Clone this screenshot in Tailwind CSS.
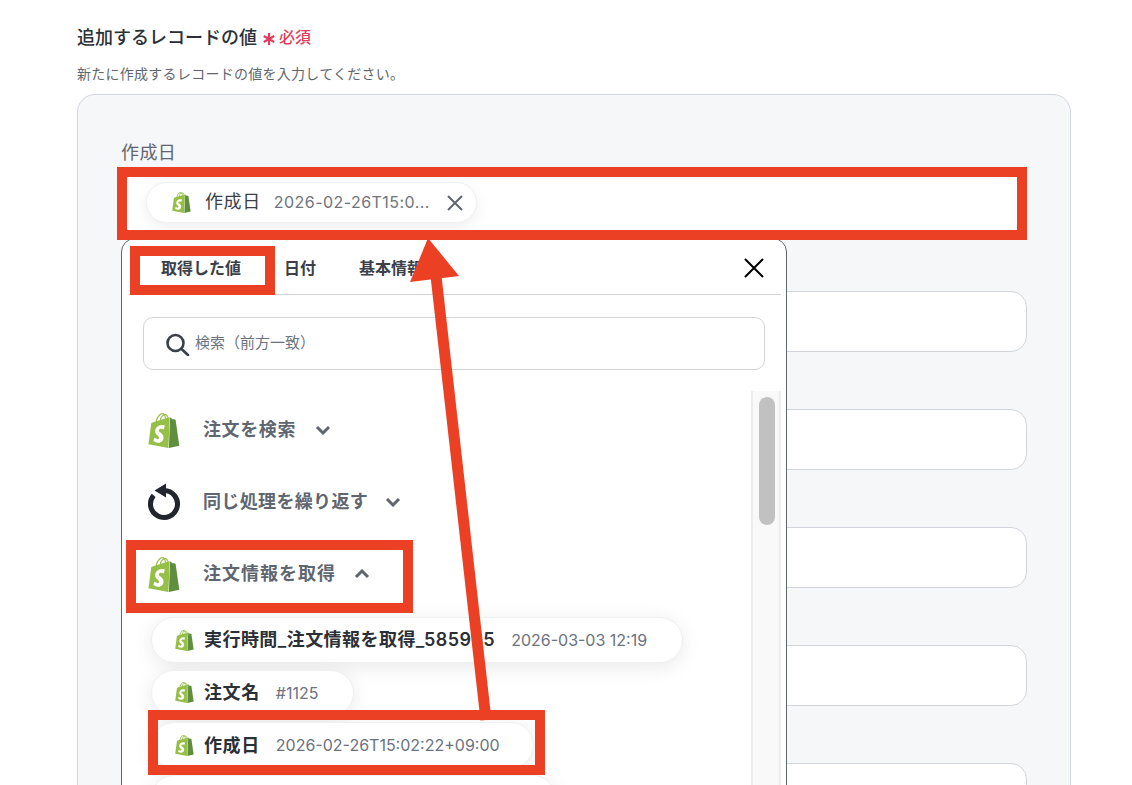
<!doctype html>
<html lang="ja">
<head>
<meta charset="utf-8">
<script src="https://cdn.jsdelivr.net/npm/@tailwindcss/browser@4"></script>
</head>
<body class="bg-white">
<div class="relative h-[785px] w-[1132px] overflow-hidden bg-white font-['Inter','Noto_Sans_CJK_JP',sans-serif]">
  <svg class="hidden"><defs>
    <g id="shop">
      <path fill="#5e8e3e" d="M15.337 23.979l7.216-1.561s-2.604-17.613-2.625-17.73c-.018-.116-.114-.192-.211-.192s-1.929-.136-1.929-.136-1.275-1.274-1.439-1.411c-.045-.037-.075-.057-.121-.074l-.914 21.104h.023z"/>
      <path fill="#95bf47" d="M11.71 11.305s-.81-.424-1.774-.424c-1.447 0-1.504.906-1.504 1.141 0 1.232 3.24 1.715 3.24 4.629 0 2.295-1.44 3.76-3.406 3.76-2.354 0-3.54-1.465-3.54-1.465l.646-2.086s1.245 1.066 2.28 1.066c.675 0 .975-.545.975-.932 0-1.619-2.654-1.694-2.654-4.359-.034-2.237 1.571-4.416 4.827-4.416 1.257 0 1.875.361 1.875.361l-.945 2.715-.02.01zM11.17.83c.136 0 .271.038.405.135-.984.465-2.064 1.639-2.508 3.992-.656.213-1.293.405-1.889.578C7.697 3.75 8.951.84 11.17.84V.83zm1.235 2.949v.135c-.754.232-1.583.484-2.394.736.466-1.777 1.333-2.645 2.085-2.971.193.501.309 1.176.309 2.1zm.539-2.234c.694.074 1.141.867 1.429 1.755-.349.114-.735.231-1.158.366v-.252c0-.752-.096-1.371-.271-1.871v.002zm2.992 1.289c-.02 0-.06.021-.078.021s-.289.075-.714.21c-.423-1.233-1.176-2.37-2.508-2.37h-.115C12.135.209 11.669 0 11.265 0 8.159 0 6.675 3.877 6.21 5.846c-1.194.365-2.063.636-2.16.674-.675.213-.694.232-.772.87-.075.462-1.83 14.063-1.83 14.063L15.009 24l.927-21.166z"/>
    </g>
  </defs></svg>

  <div class="pl-[77px] pr-[61px] pt-[24px]">
    <div class="flex h-[27px] items-center">
      <span class="text-[18px] leading-[27px] font-medium text-[#2b2f36]">追加するレコードの値</span>
      <svg viewBox="0 0 14 14" class="ml-[5px] mt-[3px] h-[14px] w-[14px]" fill="none" stroke="#e23d5e" stroke-width="2.2"><path d="M7 1V13M1.8 4L12.2 10M12.2 4L1.8 10"/></svg>
      <span class="ml-[3px] text-[16px] leading-[27px] font-medium text-[#e23d5e]">必須</span>
    </div>
    <p class="mt-[12px] text-[14px] leading-[21px] tracking-[0.27px] text-[#5f6670]">新たに作成するレコードの値を入力してください。</p>

    <div class="relative mt-[10px] h-[760px] rounded-[18px] border border-[#d1d5de] bg-[#f6f7f9] pl-[43px] pr-[43px] pt-[44px]">
      <div class="flex flex-col gap-[24px]">
        <div>
          <div class="mb-[7px] h-[27px] text-[18px] leading-[27px] tracking-[0.4px] text-[#5f6670]">作成日</div>
          <div class="flex h-[61px] items-center rounded-[16px] border border-[#d1d5db] bg-white pb-[2px] pl-[24px]">
            <div class="flex h-[41px] items-center rounded-full border border-[#eef0f3] bg-white pl-[24px] pr-[12px] shadow-[0_4px_14px_rgba(0,0,0,0.07)]">
              <svg viewBox="0 0 24 24" class="h-[21px] w-[21px]"><use href="#shop"/></svg>
              <span class="ml-[13px] pb-[2px] text-[18px] tracking-[0.6px] text-[#3b4048]">作成日</span>
              <span class="ml-[13px] w-[157px] whitespace-nowrap pb-[1px] text-[16px] tracking-[0.45px] text-[#6f747c]">2026-02-26T15:0...</span>
              <svg viewBox="0 0 18 18" class="ml-[15px] h-[18px] w-[18px]" fill="none" stroke="#5f6670" stroke-width="2"><path d="M2 2l14 14M16 2L2 16"/></svg>
            </div>
          </div>
        </div>
        <div><div class="mb-[6px] h-[27px]"></div><div class="h-[61px] rounded-[16px] border border-[#d1d5db] bg-white"></div></div>
        <div><div class="mb-[6px] h-[27px]"></div><div class="h-[61px] rounded-[16px] border border-[#d1d5db] bg-white"></div></div>
        <div><div class="mb-[6px] h-[27px]"></div><div class="h-[61px] rounded-[16px] border border-[#d1d5db] bg-white"></div></div>
        <div><div class="mb-[6px] h-[27px]"></div><div class="h-[61px] rounded-[16px] border border-[#d1d5db] bg-white"></div></div>
        <div><div class="mb-[6px] h-[27px]"></div><div class="h-[61px] rounded-[16px] border border-[#d1d5db] bg-white"></div></div>
      </div>

      <!-- dropdown -->
      <div class="absolute left-[43px] top-[143px] flex h-[600px] w-[666px] flex-col rounded-[14px] border border-[#5f6670] bg-white">
        <div class="ml-[8px] mr-[5px] flex h-[56px] items-center justify-between border-b border-[#d1d5db] pl-[31px] pr-[17px] pt-[3px]">
          <div class="flex gap-[43px] text-[16px] font-semibold text-[#3b4048]">
            <span>取得した値</span><span>日付</span><span>基本情報</span>
          </div>
          <svg viewBox="0 0 20 20" class="mb-[1px] h-[20px] w-[20px]" fill="none" stroke="#000" stroke-width="2"><path d="M1 1l18 18M19 1L1 19"/></svg>
        </div>
        <div class="mx-[21px] mt-[22px] flex h-[53px] items-center gap-[5px] rounded-[10px] border border-[#d1d5db] bg-white pl-[22px]">
          <svg viewBox="0 0 24 24" class="h-[24px] w-[24px]" fill="none" stroke="#3b4048" stroke-width="2.6" stroke-linecap="round"><circle cx="9.5" cy="11" r="8"/><path d="M15.5 17L22 23"/></svg>
          <span class="pb-[1px] text-[15px] text-[#6b7280]">検索（前方一致）</span>
        </div>
        <div class="mt-[21px] flex min-h-0 flex-1 overflow-hidden pr-[5px]">
          <div class="min-w-0 flex-1 pt-[3px]">
            <div class="flex h-[72px] items-center pl-[24px]">
              <svg viewBox="0 0 24 24" class="h-[35px] w-[36px]"><use href="#shop"/></svg>
              <span class="ml-[21px] pb-[2px] text-[18px] font-semibold tracking-[0.6px] text-[#5f6670]">注文を検索</span>
              <svg viewBox="0 0 16 10" class="ml-[19px] h-[10px] w-[16px]" fill="none" stroke="#5f6670" stroke-width="3"><path d="M2 2l6 6 6-6"/></svg>
            </div>
            <div class="flex h-[72px] items-center pl-[24px]">
              <svg viewBox="0 0 36 40" class="h-[40px] w-[36px]"><path d="M18 8.5A13.5 13.5 0 1 1 7.66 13.3" fill="none" stroke="#22262c" stroke-width="5"/><path d="M20 1.5V15.5L8.5 8.5Z" fill="#22262c"/></svg>
              <span class="ml-[21px] pb-[2px] text-[18px] font-semibold tracking-[0.35px] text-[#5f6670]">同じ処理を繰り返す</span>
              <svg viewBox="0 0 16 10" class="ml-[17px] h-[10px] w-[16px]" fill="none" stroke="#5f6670" stroke-width="3"><path d="M2 2l6 6 6-6"/></svg>
            </div>
            <div class="flex h-[72px] items-center pl-[24px]">
              <svg viewBox="0 0 24 24" class="h-[35px] w-[36px]"><use href="#shop"/></svg>
              <span class="ml-[21px] pb-[2px] text-[18px] font-semibold tracking-[1px] text-[#5f6670]">注文情報を取得</span>
              <svg viewBox="0 0 16 10" class="ml-[18px] h-[10px] w-[16px]" fill="none" stroke="#5f6670" stroke-width="3"><path d="M2 8l6-6 6 6"/></svg>
            </div>
            <div class="mt-[7px] flex flex-col items-start gap-[6.67px] pl-[29px]">
              <div class="flex h-[46px] items-center rounded-full border border-[#eef0f3] bg-white pl-[22px] pr-[35px] shadow-[0_4px_20px_rgba(0,0,0,0.09)]">
                <svg viewBox="0 0 24 24" class="h-[21px] w-[21px]"><use href="#shop"/></svg>
                <span class="ml-[9px] pb-[2px] text-[18px] font-semibold tracking-[0.45px] text-[#2b2f36]">実行時間_注文情報を取得_585965</span>
                <span class="ml-[16px] text-[16px] text-[#6b7280]">2026-03-03 12:19</span>
              </div>
              <div class="flex h-[46px] items-center rounded-full border border-[#eef0f3] bg-white pl-[22px] pr-[35px] shadow-[0_4px_20px_rgba(0,0,0,0.09)]">
                <svg viewBox="0 0 24 24" class="h-[21px] w-[21px]"><use href="#shop"/></svg>
                <span class="ml-[9px] text-[18px] font-semibold tracking-[0.6px] text-[#2b2f36]">注文名</span>
                <span class="ml-[16px] text-[16px] text-[#6b7280]">#1125</span>
              </div>
              <div class="flex h-[46px] items-center rounded-full border border-[#eef0f3] bg-white pl-[22px] pr-[33px] shadow-[0_4px_20px_rgba(0,0,0,0.09)]">
                <svg viewBox="0 0 24 24" class="h-[21px] w-[21px]"><use href="#shop"/></svg>
                <span class="ml-[9px] text-[18px] font-semibold tracking-[0.6px] text-[#2b2f36]">作成日</span>
                <span class="ml-[16px] text-[16px] text-[#6b7280]">2026-02-26T15:02:22+09:00</span>
              </div>
              <div class="h-[46px] w-[405px] rounded-full border border-[#eef0f3] bg-white shadow-[0_4px_20px_rgba(0,0,0,0.09)]"></div>
            </div>
          </div>
          <div class="h-full w-[30px] shrink-0 border-x-2 border-[#ededed] bg-[#f9f9f9] pl-[6px] pt-[6px]">
            <div class="h-[128px] w-[16px] rounded-full bg-[#c1c1c1]"></div>
          </div>
        </div>
      </div>
    </div>
  </div>

  <!-- annotations -->
  <div class="absolute left-[117px] top-[167px] h-[73px] w-[910px] border-[10px] border-[#ec4025]"></div>
  <div class="absolute left-[130px] top-[246px] h-[49px] w-[145px] border-[10px] border-[#ec4025]"></div>
  <div class="absolute left-[126px] top-[540px] h-[73px] w-[287px] border-[10px] border-[#ec4025]"></div>
  <div class="absolute left-[148px] top-[710px] h-[65px] w-[397px] border-[10px] border-[#ec4025]"></div>
  <svg class="absolute left-0 top-0" width="1132" height="785" viewBox="0 0 1132 785">
    <path d="M486 720L436 276" fill="none" stroke="#ec4025" stroke-width="11"/>
    <path d="M428 238L459 276L410 282Z" fill="#ec4025"/>
  </svg>
</div>
</body>
</html>
